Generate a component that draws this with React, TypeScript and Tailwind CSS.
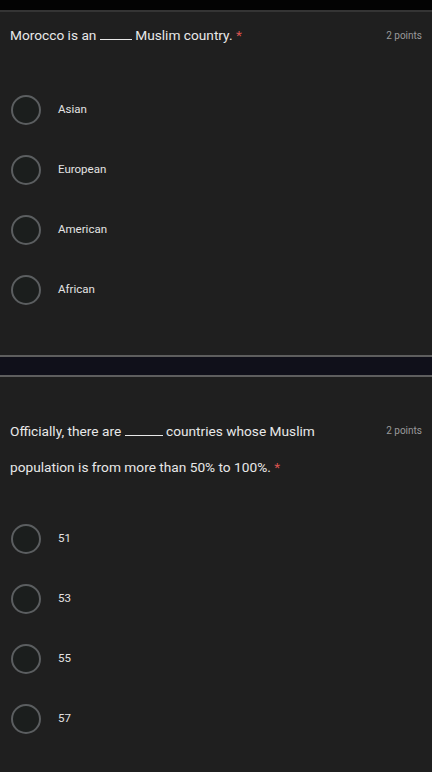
import React from "react";

function Radio({ label }: { label: string }) {
  return (
    <div className="flex h-[60px] items-center">
      <div className="ml-[11px] h-[30px] w-[30px] rounded-full border-[2.5px] border-[#5b5e60] bg-[#1b1e1d]" />
      <span className="ml-[17px] text-[11.5px] text-[#e3e3e3]">{label}</span>
    </div>
  );
}

function Blank({ w }: { w: number }) {
  return (
    <span
      className="inline-block h-[11px] border-b border-[#e8e8e8] align-baseline"
      style={{ width: w }}
    />
  );
}

export default function App() {
  const font = { fontFamily: "Roboto, 'Noto Sans', sans-serif" };
  return (
    <div className="w-[432px] h-[772px] overflow-hidden bg-[#1f1f1f]" style={font}>
      <div className="h-[10px] bg-[#030303]" />
      <div className="h-[2px] bg-[#343434]" />
      {/* Card 1 */}
      <div className="bg-[#1f1f1f] pt-[13px] pb-[35px]">
        <div className="flex items-center justify-between pl-[10px] pr-[10px] h-[20px]">
          <p className="text-[13.7px] text-[#e8e8e8]">
            Morocco is an <Blank w={32} /> Muslim country. <span className="text-[#d9534f]">*</span>
          </p>
          <span className="text-[10px] text-[#9a9a9a]">2 points</span>
        </div>
        <div className="mt-[35px]">
          {["Asian", "European", "American", "African"].map((o) => (
            <Radio key={o} label={o} />
          ))}
        </div>
      </div>
      <div className="h-[2px] bg-[#5e5e5e]" />
      <div className="h-[18px] bg-[#10101a]" />
      <div className="h-[2px] bg-[#5e5e5e]" />
      {/* Card 2 */}
      <div className="bg-[#1f1f1f] pt-[36px]">
        <div className="flex items-start justify-between pl-[10px] pr-[10px]">
          <p className="w-[340px] text-[13.7px] leading-[36px] text-[#e8e8e8]">
            Officially, there are <Blank w={38} /> countries whose Muslim population is from more than 50% to 100%.{" "}
            <span className="text-[#d9534f]">*</span>
          </p>
          <span className="text-[10px] leading-[36px] text-[#9a9a9a]">2 points</span>
        </div>
        <div className="mt-[24px]">
          {["51", "53", "55", "57"].map((o) => (
            <Radio key={o} label={o} />
          ))}
        </div>
      </div>
    </div>
  );
}
